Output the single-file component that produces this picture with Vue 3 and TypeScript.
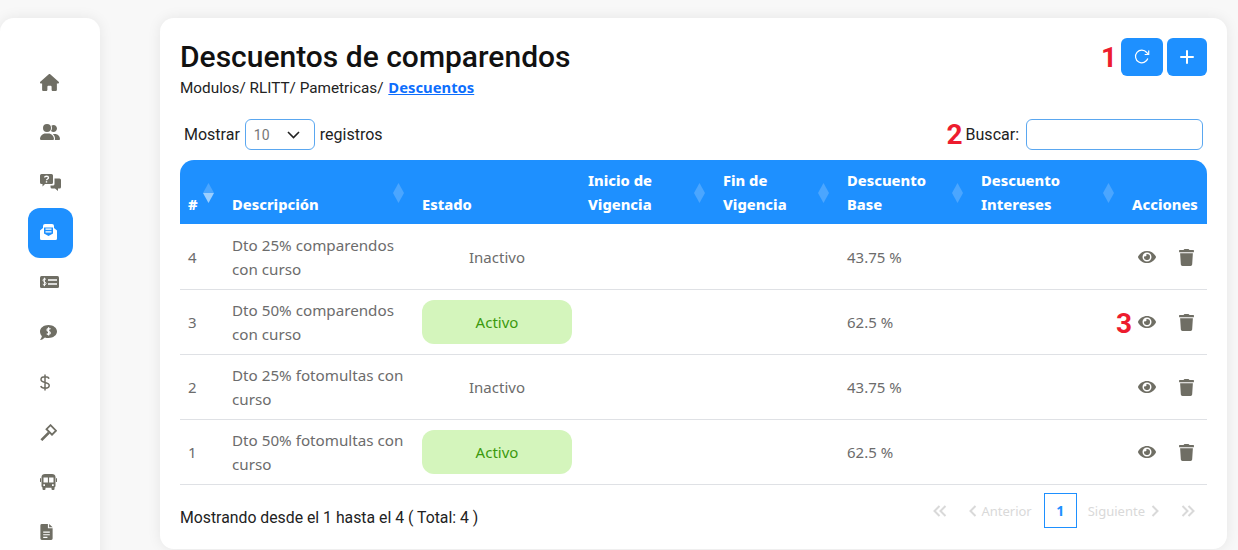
<script setup lang="ts">
interface Row { id: number; name: string; active: boolean; base: string; mark?: boolean }
const rows: Row[] = [
  { id: 4, name: 'Dto 25% comparendos con curso', active: false, base: '43.75 %' },
  { id: 3, name: 'Dto 50% comparendos con curso', active: true, base: '62.5 %', mark: true },
  { id: 2, name: 'Dto 25% fotomultas con curso', active: false, base: '43.75 %' },
  { id: 1, name: 'Dto 50% fotomultas con curso', active: true, base: '62.5 %' },
]
const heads = [
  { key: 'num', label: '#', sort: true, first: true },
  { key: 'desc', label: 'Descripción', sort: true },
  { key: 'estado', label: 'Estado', sort: false },
  { key: 'inicio', label: 'Inicio de Vigencia', sort: true },
  { key: 'fin', label: 'Fin de Vigencia', sort: true },
  { key: 'base', label: 'Descuento Base', sort: true },
  { key: 'int', label: 'Descuento Intereses', sort: true },
  { key: 'acc', label: 'Acciones', sort: false },
]
</script>

<template>
  <div class="page">
    <aside class="side">
      <nav class="nav">
        <a class="item">
          <svg width="19" height="17" viewBox="0 0 576 512"><path d="M575.8 255.500c0 18-15 32.100-32 32.100h-32l.7 160.200c0 2.700-.2 5.400-.5 8.100V472c0 22.100-17.900 40-40 40H456c-1.100 0-2.200 0-3.300-.1c-1.400 .1-2.800 .1-4.200 .1H416 392c-22.100 0-40-17.900-40-40V448 384c0-17.700-14.300-32-32-32H256c-17.700 0-32 14.300-32 32v64 24c0 22.100-17.900 40-40 40H160 128.100c-1.500 0-3-.1-4.500-.2c-1.200 .1-2.400 .2-3.600 .2H104c-22.100 0-40-17.900-40-40V360c0-.9 0-1.900 .1-2.800V287.600H32c-18 0-32-14-32-32.100c0-9 3-17 10-24L266.400 8c7-7 15-8 22-8s15 2 21 7L564.800 231.500c8 7 12 15 11 24z"/></svg>
        </a>
        <a class="item">
          <svg width="20" height="16" viewBox="0 0 640 512"><path d="M96 128a128 128 0 1 1 256 0A128 128 0 1 1 96 128zM0 482.300C0 383.800 79.800 304 178.300 304h91.400C368.200 304 448 383.800 448 482.300c0 16.400-13.300 29.700-29.700 29.700H29.700C13.300 512 0 498.700 0 482.300zM609.300 512H471.400c5.400-9.400 8.600-20.300 8.600-32v-8c0-60.700-27.100-115.200-69.800-151.800c2.400-.1 4.700-.2 7.100-.2h61.400C567.800 320 640 392.200 640 481.300c0 17-13.800 30.700-30.700 30.700zM432 256c-31 0-59-12.600-79.300-32.900C372.400 196.500 384 163.600 384 128c0-26.800-6.600-52.100-18.300-74.300C384.300 40.100 407.200 32 432 32c61.900 0 112 50.100 112 112s-50.100 112-112 112z"/></svg>
        </a>
        <a class="item">
          <svg width="21" height="17" viewBox="0 0 21 17">
            <path d="M1.500 0h10A1.500 1.500 0 0 1 13 1.500v7A1.500 1.500 0 0 1 11.500 10H5l-2.500 2.500V10h-1A1.500 1.500 0 0 1 0 8.500v-7A1.500 1.500 0 0 1 1.500 0z"/>
            <path d="M14.500 4.500h5A1.500 1.500 0 0 1 21 6v7a1.500 1.500 0 0 1-1.500 1.500H18V17l-3-2.500h-3A1.500 1.500 0 0 1 10.500 13v-1.500h2.500a1.500 1.500 0 0 0 1.500-1.500z"/>
            <path d="M4.500 3.500C4.700 1.800 8.500 1.800 8.500 3.700 8.500 5 6.500 5 6.500 6.300" fill="none" stroke="#fff" stroke-width="1.300"/>
            <rect x="5.800" y="7.200" width="1.400" height="1.400" fill="#fff"/>
          </svg>
        </a>
        <a class="item active">
          <svg width="17" height="16" viewBox="0 0 17 16">
            <path d="M0 6.500 3 4V2a2 2 0 0 1 2-2h7a2 2 0 0 1 2 2v2l3 2.500V14.500A1.500 1.500 0 0 1 15.500 16H1.500A1.500 1.500 0 0 1 0 14.500z" fill="#fff"/>
            <path d="M4 3.500h9V9.500L8.500 12 4 9.500z" fill="#1e90ff"/>
            <path d="M5.500 5.200h6M5.500 7.800h6" stroke="#fff" stroke-width="1.200"/>
          </svg>
        </a>
        <a class="item">
          <svg width="19" height="12" viewBox="0 0 19 12">
            <rect width="19" height="12" rx="1.500"/>
            <path d="M8 4h9M8 8h9" stroke="#fff" stroke-width="1.300"/>
            <path d="M6 3.500C5.200 2.500 3 2.700 3 4.200 3 6 6 5.600 6 7.500 6 9 3.700 9.300 2.800 8.200M4.400 1.700v8.500" fill="none" stroke="#fff" stroke-width="1"/>
          </svg>
        </a>
        <a class="item">
          <svg width="17" height="15" viewBox="0 0 17 15">
            <path d="M8.500 0C13.200 0 17 2.900 17 6.500S13.200 13 8.500 13c-1.300 0-2.500-.2-3.600-.6C3.700 13.600 2 14.700 0 15c1-1.100 1.700-2.400 1.900-3.900C.7 9.900 0 8.300 0 6.500 0 2.900 3.800 0 8.500 0z"/>
            <path d="M10.500 4.200C9.800 3.200 7 3.300 7 4.900 7 6.600 10.300 6.200 10.300 8 10.300 9.500 7.600 9.700 6.800 8.600M8.600 2.300v8.300" fill="none" stroke="#fff" stroke-width="1.200"/>
          </svg>
        </a>
        <a class="item">
          <svg width="10" height="17" viewBox="0 0 10 16">
            <path d="M9 4.200C8.500 2.800 7 2.300 5 2.300 2.800 2.300 1 3.200 1 5 1 9 9.200 7 9.200 11 9.200 12.900 7.400 13.700 5.100 13.700 3 13.700 1.300 13 .8 11.500M5 0v16" fill="none" stroke="currentColor" stroke-width="1.500"/>
          </svg>
        </a>
        <a class="item">
          <svg width="17" height="17" viewBox="0 0 17 17">
            <path d="M10.500 1.200 16 6.700 12 10.700 6.500 5.200z" fill="#fff" stroke="currentColor" stroke-width="1.800"/>
            <path d="M8 8.700 1.500 15.200 2.300 16 8.800 9.500z" fill="#fff" stroke="currentColor" stroke-width="1.500"/>
          </svg>
        </a>
        <a class="item">
          <svg width="17" height="16" viewBox="0 0 17 16">
            <path fill-rule="evenodd" d="M5 0h7C14 0 15.500 1.200 15.500 3v9a1.500 1.500 0 0 1-1 1.400V15a1 1 0 0 1-1 1h-1a1 1 0 0 1-1-1v-1.300h-6V15a1 1 0 0 1-1 1h-1a1 1 0 0 1-1-1v-1.600a1.500 1.500 0 0 1-1-1.400V3C1.500 1.200 3 0 5 0zM3.500 3.500v5h4.400v-5zM9.100 3.500v5h4.400v-5zM3.300 10.300v1.600h1.700v-1.600zM12 10.300v1.600h1.700v-1.600z"/>
            <rect y="4" width="1" height="4" rx=".5"/><rect x="16" y="4" width="1" height="4" rx=".5"/>
          </svg>
        </a>
        <a class="item">
          <svg width="13" height="16" viewBox="0 0 13 17">
            <path fill-rule="evenodd" d="M1.500 0H8v4.500h5v11A1.500 1.500 0 0 1 11.500 17h-10A1.500 1.500 0 0 1 0 15.500v-14A1.500 1.500 0 0 1 1.500 0zM3 8v1.200h7V8zM3 10.800V12h7v-1.200zM3 13.600v1.200h4.500v-1.200z"/>
            <path d="M9.300 0 13 3.400H9.300z"/>
          </svg>
        </a>
      </nav>
    </aside>

    <main class="card">
      <header class="top">
        <div class="titles">
          <h1 class="title">Descuentos de comparendos</h1>
          <p class="crumbs">Modulos/ RLITT/ Pametricas/ <a class="crumb-link">Descuentos</a></p>
        </div>
        <div class="actions">
          <span class="mark">1</span>
          <button class="btn refresh" type="button" aria-label="Recargar">
            <svg width="16" height="16" viewBox="0 0 16 16" fill="none" stroke="#fff" stroke-width="1.200">
              <path d="M13.800 9.500A6.300 6.300 0 1 1 12.700 3.500L14.500 5.300"/>
              <path d="M14.700 1.500v4h-4" />
            </svg>
          </button>
          <button class="btn add" type="button" aria-label="Agregar">
            <svg width="14" height="14" viewBox="0 0 14 14" stroke="#fff" stroke-width="2" stroke-linecap="round"><path d="M7 1v12M1 7h12"/></svg>
          </button>
        </div>
      </header>

      <div class="filters">
        <div class="length">
          <span>Mostrar</span>
          <div class="select">
            <span>10</span>
            <svg width="13" height="8" viewBox="0 0 13 8" fill="none" stroke="#222" stroke-width="1.600"><path d="M1 1l5.500 5.500L12 1"/></svg>
          </div>
          <span>registros</span>
        </div>
        <div class="search">
          <span class="mark">2</span>
          <span class="search-label">Buscar:</span>
          <input class="input" type="text" aria-label="Buscar" />
        </div>
      </div>

      <table class="table">
        <thead>
          <tr>
            <th v-for="h in heads" :key="h.key" :class="'c-' + h.key">
              {{ h.label }}
              <svg v-if="h.sort" class="sort" width="11" height="20" viewBox="0 0 11 20">
                <path d="M5.500 0 11 10H0z" fill="#4ba6ff"/>
                <path d="M0 10h11l-5.500 10z" :fill="h.first ? '#9ccfff' : '#4ba6ff'"/>
              </svg>
            </th>
          </tr>
        </thead>
        <tbody>
          <tr v-for="r in rows" :key="r.id">
            <td>{{ r.id }}</td>
            <td class="name">{{ r.name }}</td>
            <td><span class="status" :class="{ on: r.active }">{{ r.active ? 'Activo' : 'Inactivo' }}</span></td>
            <td></td>
            <td></td>
            <td>{{ r.base }}</td>
            <td></td>
            <td class="acts">
              <span v-if="r.mark" class="mark row-mark">3</span>
              <svg class="eye" width="18" height="16" viewBox="0 0 576 512"><path d="M572.520 241.400C518.290 135.590 410.930 64 288 64S57.680 135.640 3.480 241.410a32.350 32.350 0 0 0 0 29.190C57.710 376.410 165.070 448 288 448s230.320-71.640 284.520-177.410a32.350 32.350 0 0 0 0-29.190zM288 400a144 144 0 1 1 144-144 143.930 143.930 0 0 1-144 144zm0-240a95.310 95.310 0 0 0-25.310 3.790 47.850 47.850 0 0 1-66.900 66.900A95.780 95.780 0 1 0 288 160z"/></svg>
              <svg class="trash" width="15" height="17" viewBox="0 0 448 512"><path d="M432 32H312l-9.400-18.700A24 24 0 0 0 281.100 0H166.800a23.720 23.720 0 0 0-21.400 13.300L136 32H16A16 16 0 0 0 0 48v32a16 16 0 0 0 16 16h416a16 16 0 0 0 16-16V48a16 16 0 0 0-16-16zM53.200 467a48 48 0 0 0 47.900 45h245.800a48 48 0 0 0 47.900-45L416 128H32z"/></svg>
            </td>
          </tr>
        </tbody>
      </table>

      <footer class="foot">
        <span class="info">Mostrando desde el 1 hasta el 4 ( Total: 4 )</span>
        <div class="pager">
          <svg class="dbl first" width="14" height="12" viewBox="0 0 14 12"><path d="M6.500 1 1.500 6l5 5M12.500 1l-5 5 5 5"/></svg>
          <span class="page-link prev">
            <svg width="8" height="12" viewBox="0 0 8 12"><path d="M6.500 1 1.500 6l5 5"/></svg>
            Anterior
          </span>
          <span class="current">1</span>
          <span class="page-link next">
            Siguiente
            <svg width="8" height="12" viewBox="0 0 8 12"><path d="M1.500 1l5 5-5 5"/></svg>
          </span>
          <svg class="dbl last" width="14" height="12" viewBox="0 0 14 12"><path d="M1.500 1l5 5-5 5M7.500 1l5 5-5 5"/></svg>
        </div>
      </footer>
    </main>
  </div>
</template>

<style>
html, body { margin: 0; background: #f8f8f8; overflow: hidden; }
</style>

<style scoped>
* { box-sizing: border-box; }
.page {
  display: flex;
  align-items: flex-start;
  gap: 60px;
  height: 550px;
  padding-top: 18px;
  padding-right: 11px;
  overflow: hidden;
  font-family: Roboto, sans-serif;
  font-size: 16px;
  color: #222;
}
.side {
  width: 100px;
  height: 640px;
  flex: none;
  background: #fff;
  border-radius: 14px 14px 0 0;
  box-shadow: 0 0 14px rgba(0, 0, 0, .08);
  padding: 40px 0 0 28px;
}
.nav { display: flex; flex-direction: column; }
.item {
  width: 45px;
  height: 50px;
  display: flex;
  align-items: center;
  padding: 0 0 2px 12px;
  border-radius: 12px;
  color: #6f6e64;
  fill: #6f6e64;
}
.item.active { background: #1e90ff; }
.card {
  flex: 1;
  height: 531px;
  background: #fff;
  border-radius: 14px;
  box-shadow: 0 0 14px rgba(0, 0, 0, .08);
  padding: 20px 20px 0;
}
.top { display: flex; justify-content: space-between; align-items: flex-start; }
.title {
  margin: 0;
  font-size: 30px;
  line-height: 38px;
  font-weight: 500;
  color: #111;
}
.crumbs { margin: 2px 0 0; height: 18px; font-size: 15.300px; line-height: 18px; color: #222; }
.crumb-link { color: #0d6efd; font-weight: 700; text-decoration: underline; font-family: "Noto Sans", sans-serif; font-size: 14.800px; margin-left: 1px; }
.actions { display: flex; align-items: center; gap: 4px; }
.mark { color: #ed1c2e; font-family: Roboto, sans-serif; font-weight: 700; font-size: 28px; line-height: 30px; }
.actions .mark { margin-top: 2px; }
.btn {
  height: 38px;
  border: 0;
  border-radius: 6px;
  background: #1e90ff;
  padding: 0;
  display: flex;
  align-items: center;
  justify-content: center;
}
.refresh { width: 42px; }
.add { width: 40px; }
.filters {
  display: flex;
  justify-content: space-between;
  align-items: center;
  margin-top: 23px;
  padding: 0 4px;
}
.length { display: flex; align-items: center; gap: 5px; }
.select {
  width: 70px;
  height: 31px;
  border: 1px solid #5aa7f0;
  border-radius: 6px;
  padding: 0 14px 0 8px;
  display: flex;
  align-items: center;
  justify-content: space-between;
  color: #777;
  font-size: 14px;
}
.search { display: flex; align-items: center; }
.search .mark { margin-right: 3px; }
.search-label { margin-right: 7px; }
.input {
  width: 177px;
  height: 31px;
  border: 1px solid #5aa7f0;
  border-radius: 6px;
  background: #fff;
  outline: none;
}
.table {
  width: 1027px;
  margin-top: 10px;
  border-collapse: separate;
  border-spacing: 0;
  table-layout: fixed;
  font-family: "Noto Sans", sans-serif;
  font-size: 15px;
  color: #6c6c6c;
}
th {
  position: relative;
  background: #1e90ff;
  color: #fff;
  font-size: 14.700px;
  font-weight: 800;
  line-height: 24px;
  height: 65px;
  padding: 8px;
  border-bottom: 1px solid #fff;
  text-align: left;
  vertical-align: bottom;
}
.c-num { width: 44px; border-top-left-radius: 14px; }
.c-desc { width: 190px; }
.c-estado { width: 166px; }
.c-inicio { width: 135px; }
.c-fin { width: 124px; }
.c-base { width: 134px; }
.c-int { width: 151px; }
.c-acc { width: 83px; border-top-right-radius: 14px; }
.c-inicio, .c-fin, .c-base, .c-int { padding-right: 30px; }
.sort { position: absolute; right: 10px; top: 23px; }
td {
  height: 65px;
  padding: 8px;
  line-height: 24px;
  border-bottom: 1px solid #dfe1e5;
  vertical-align: middle;
}
.name { font-size: 15.200px; }
.status {
  display: block;
  width: 150px;
  height: 44px;
  line-height: 44px;
  text-align: center;
  border-radius: 12px;
}
.status.on { background: #d4f5bc; color: #3c9a0e; }
.acts { position: relative; white-space: nowrap; fill: #6f6e64; }
.eye { position: absolute; left: 14px; top: 24px; }
.trash { position: absolute; left: 55px; top: 24px; }
.row-mark { position: absolute; left: -8px; top: 19px; }
.foot {
  display: flex;
  justify-content: space-between;
  align-items: center;
  margin-top: 8px;
}
.info { color: #222; margin-top: 13px; font-size: 15.800px; }
.pager { display: flex; align-items: center; color: #d9d9d9; font-size: 13px; font-family: "Noto Sans", sans-serif; padding-right: 12px; }
.pager svg { fill: none; stroke: #d9d9d9; stroke-width: 2; }
.page-link { display: flex; align-items: center; gap: 4px; }
.next { gap: 6px; }
.prev { margin-left: 22px; }
.current {
  width: 33px;
  height: 35px;
  margin: 0 11px 0 12px;
  border: 1px solid #1e90ff;
  display: flex;
  align-items: center;
  justify-content: center;
  color: #1e90ff;
  font-weight: 700;
  font-size: 14px;
}
.last { margin-left: 22px; }
</style>
